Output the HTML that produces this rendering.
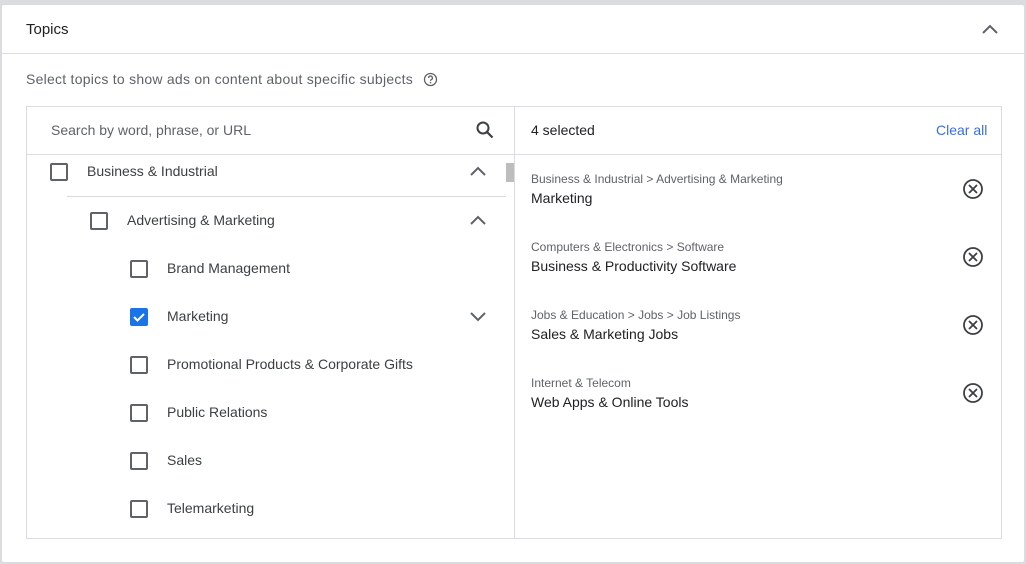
<!DOCTYPE html>
<html><head><style>
*{margin:0;padding:0;box-sizing:border-box}
body{width:1026px;height:564px;background:#dadce0;font-family:"Liberation Sans",Arial,sans-serif;position:relative;overflow:hidden}
.card{position:absolute;left:2px;top:5px;width:1022px;height:557px;background:#fff;border-radius:2px}
.a{position:absolute;white-space:nowrap}
.cb{position:absolute;width:18px;height:18px;border:2px solid #5f6368;border-radius:2px}
.t{font-size:14px;color:#3c4043}
.s{font-size:12px;color:#5f6368}
</style></head><body>
<div class="card"></div>
<div class="a" style="left:26px;top:21px;font-size:15px;color:#202124">Topics</div>
<svg class="a" style="left:980px;top:20px" width="20" height="18"><path d="M3 13l7-7 7 7" fill="none" stroke="#5f6368" stroke-width="2"/></svg>
<div class="a" style="left:2px;top:53px;width:1022px;height:1px;background:#dadce0"></div>
<div class="a" style="left:26px;top:71px;font-size:14px;color:#5f6368;letter-spacing:0.25px">Select topics to show ads on content about specific subjects</div>
<svg class="a" style="left:423px;top:72px" width="15" height="15" viewBox="0 0 15 15"><circle cx="7.5" cy="7.5" r="6" fill="none" stroke="#5f6368" stroke-width="1.3"/><path d="M5.6 6a1.9 1.9 0 1 1 2.6 1.7c-.5.3-.7.6-.7 1.2" fill="none" stroke="#5f6368" stroke-width="1.3"/><circle cx="7.5" cy="10.6" r=".8" fill="#5f6368"/></svg>
<div class="a" style="left:26px;top:106px;width:976px;height:433px;border:1px solid #dadce0"></div>
<div class="a" style="left:514px;top:106px;width:1px;height:433px;background:#dadce0"></div>
<div class="a" style="left:26px;top:154px;width:976px;height:1px;background:#dadce0"></div>
<div class="a" style="left:51px;top:122px;font-size:14px;color:#5f6368">Search by word, phrase, or URL</div>
<svg class="a" style="left:475px;top:120px" width="20" height="20"><circle cx="8" cy="8" r="5.5" fill="none" stroke="#3c4043" stroke-width="2"/><path d="M12 12l5.5 5.5" stroke="#3c4043" stroke-width="2.2"/></svg>
<div class="a" style="left:531px;top:122px;font-size:14px;color:#202124">4 selected</div>
<div class="a" style="left:936px;top:122px;font-size:14px;color:#3b6fd8">Clear all</div>
<div class="a" style="left:506px;top:163px;width:8px;height:19px;background:#bdbdbd"></div>
<div class="cb" style="left:50px;top:163px"></div><div class="a t" style="left:87px;top:163px">Business &amp; Industrial</div>
<div class="a" style="left:67px;top:196px;width:439px;height:1px;background:#dadce0"></div>
<div class="cb" style="left:90px;top:212px"></div><div class="a t" style="left:127px;top:212px">Advertising &amp; Marketing</div>
<div class="cb" style="left:130px;top:260px"></div><div class="a t" style="left:167px;top:260px">Brand Management</div>
<div class="cb" style="left:130px;top:308px;background:#1a73e8;border-color:#1a73e8"><svg width="14" height="14" style="position:absolute;left:0;top:0"><path d="M2 7l3.5 3.5L12 4" fill="none" stroke="#fff" stroke-width="2"/></svg></div><div class="a t" style="left:167px;top:308px">Marketing</div>
<div class="cb" style="left:130px;top:356px"></div><div class="a t" style="left:167px;top:356px">Promotional Products &amp; Corporate Gifts</div>
<div class="cb" style="left:130px;top:404px"></div><div class="a t" style="left:167px;top:404px">Public Relations</div>
<div class="cb" style="left:130px;top:452px"></div><div class="a t" style="left:167px;top:452px">Sales</div>
<div class="cb" style="left:130px;top:500px"></div><div class="a t" style="left:167px;top:500px">Telemarketing</div>
<svg class="a" style="left:468px;top:163px" width="20" height="16"><path d="M3 12l7-7 7 7" fill="none" stroke="#5f6368" stroke-width="2"/></svg>
<svg class="a" style="left:468px;top:212px" width="20" height="16"><path d="M3 12l7-7 7 7" fill="none" stroke="#5f6368" stroke-width="2"/></svg>
<svg class="a" style="left:468px;top:309px" width="20" height="16"><path d="M3 4l7 7 7-7" fill="none" stroke="#5f6368" stroke-width="2"/></svg>
<div class="a s" style="left:531px;top:172px">Business &amp; Industrial &gt; Advertising &amp; Marketing</div><div class="a t" style="left:531px;top:190px;color:#202124">Marketing</div>
<div class="a s" style="left:531px;top:240px">Computers &amp; Electronics &gt; Software</div><div class="a t" style="left:531px;top:258px;color:#202124">Business &amp; Productivity Software</div>
<div class="a s" style="left:531px;top:308px">Jobs &amp; Education &gt; Jobs &gt; Job Listings</div><div class="a t" style="left:531px;top:326px;color:#202124">Sales &amp; Marketing Jobs</div>
<div class="a s" style="left:531px;top:376px">Internet &amp; Telecom</div><div class="a t" style="left:531px;top:394px;color:#202124">Web Apps &amp; Online Tools</div>
<svg class="a" style="left:962px;top:178px" width="22" height="22"><circle cx="11" cy="11" r="9" fill="none" stroke="#3c4043" stroke-width="1.8"/><path d="M7 7l8 8M15 7l-8 8" stroke="#3c4043" stroke-width="1.8"/></svg>
<svg class="a" style="left:962px;top:246px" width="22" height="22"><circle cx="11" cy="11" r="9" fill="none" stroke="#3c4043" stroke-width="1.8"/><path d="M7 7l8 8M15 7l-8 8" stroke="#3c4043" stroke-width="1.8"/></svg>
<svg class="a" style="left:962px;top:314px" width="22" height="22"><circle cx="11" cy="11" r="9" fill="none" stroke="#3c4043" stroke-width="1.8"/><path d="M7 7l8 8M15 7l-8 8" stroke="#3c4043" stroke-width="1.8"/></svg>
<svg class="a" style="left:962px;top:382px" width="22" height="22"><circle cx="11" cy="11" r="9" fill="none" stroke="#3c4043" stroke-width="1.8"/><path d="M7 7l8 8M15 7l-8 8" stroke="#3c4043" stroke-width="1.8"/></svg>
</body></html>
